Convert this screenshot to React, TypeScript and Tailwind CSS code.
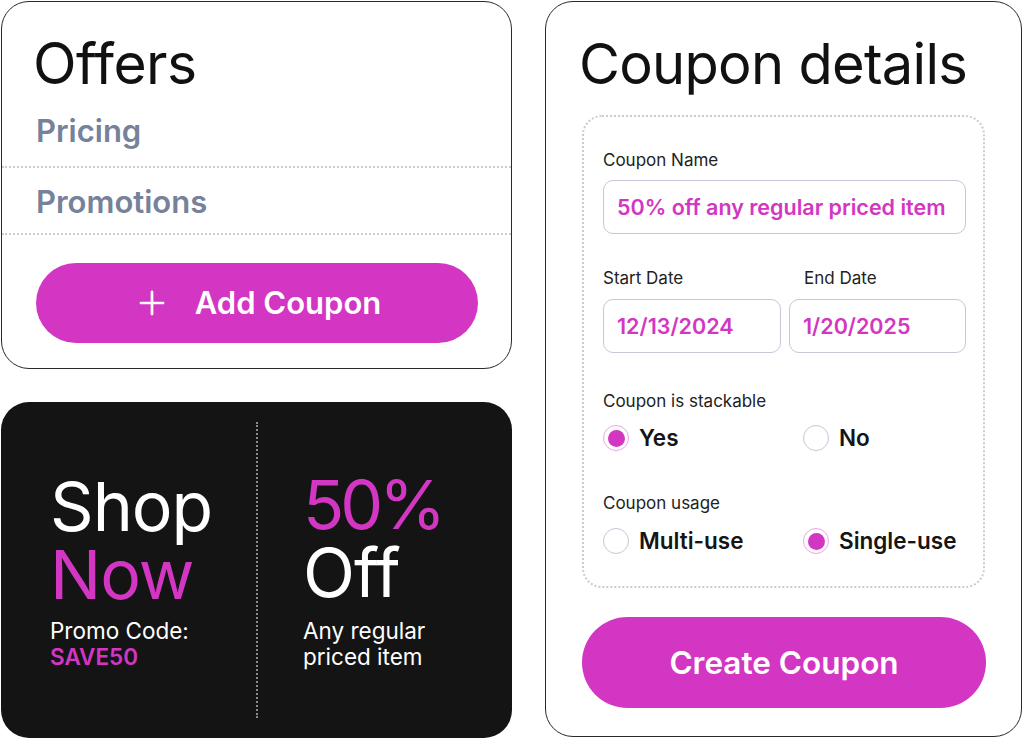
import React from "react";
import { Plus } from "lucide-react";

const head = "font-['Inter','Liberation_Sans',sans-serif]";
const body = "font-['Inter','Liberation_Sans',sans-serif]";

function Radio({ label, checked }: { label: string; checked?: boolean }) {
  return (
    <label className="h-[30px] flex items-center gap-[10px]">
      {checked ? (
        <span className="w-[26px] h-[26px] rounded-full border-[1.5px] border-[#eea3e6] flex items-center justify-center">
          <span className="w-[17px] h-[17px] rounded-full bg-[#d236c3]" />
        </span>
      ) : (
        <span className="w-[26px] h-[26px] rounded-full border-[1.5px] border-[#c4c8d8]" />
      )}
      <span className="text-[22.5px] leading-[30px] font-semibold text-[#151515]">{label}</span>
    </label>
  );
}

function Field({ value, className = "" }: { value: string; className?: string }) {
  return (
    <div
      className={`h-[54px] rounded-[10px] border-[1.5px] border-[#c4c8d8] flex items-center px-[13px] text-[21.5px] font-semibold text-[#d236c3] ${className}`}
    >
      {value}
    </div>
  );
}

export default function App() {
  return (
    <div className={`w-[1024px] h-[739px] overflow-hidden bg-white flex gap-[33px] pl-px pt-px ${body}`}>
      <div className="w-[511px] flex flex-col gap-[33px]">
        <div className="h-[368px] rounded-[28px] border-[1.5px] border-[#2a2a2a] pt-[30px] flex flex-col">
          <h1 className={`${head} px-[31px] text-[57px] leading-[64px] font-normal text-[#111] tracking-[-0.5px]`}>Offers</h1>
          <div className="mt-[2px] h-[70px] border-b-2 border-dotted border-[#c9ccd4] px-[34px] pt-[15px]">
            <span className="block text-[31px] leading-[36px] font-semibold text-[#76819a]">Pricing</span>
          </div>
          <div className="h-[67px] border-b-2 border-dotted border-[#c9ccd4] px-[34px] pt-[16px]">
            <span className="block text-[31px] leading-[36px] font-semibold text-[#76819a]">Promotions</span>
          </div>
          <div className="px-[34px] pt-[28px]">
            <button className="w-[442px] h-[80px] rounded-full bg-[#d236c3] text-white flex items-center justify-center gap-[24px] text-[31px] font-semibold">
              <Plus className="w-[38px] h-[38px]" strokeWidth={1.7} />
              <span>Add Coupon</span>
            </button>
          </div>
        </div>

        <div className="h-[336px] rounded-[28px] bg-[#141414] flex">
          <div className="w-[255px] pl-[49px] pt-[70px]">
            <div className={`${head} text-[68px] leading-[68px] font-normal tracking-[-1px]`}>
              <div className="text-white">Shop</div>
              <div className="text-[#d236c3]">Now</div>
            </div>
            <div className="mt-[10px] text-[22.5px] leading-[26px] text-white">Promo Code:</div>
            <div className="text-[22.5px] leading-[26px] font-semibold text-[#d236c3]">SAVE50</div>
          </div>
          <div className="py-[20px]">
            <div className="h-full border-l-2 border-dotted border-[#8a8a8a]" />
          </div>
          <div className="pl-[45px] pt-[68px]">
            <div className={`${head} text-[68px] leading-[68px] font-normal tracking-[-1px]`}>
              <div className="text-[#d236c3] tracking-[-4px]">50%</div>
              <div className="text-white">Off</div>
            </div>
            <div className="mt-[12px] text-[22.5px] leading-[26px] text-white">
              Any regular
              <br />
              priced item
            </div>
          </div>
        </div>
      </div>

      <div className="w-[477px] h-[736px] rounded-[28px] border-[1.5px] border-[#2a2a2a] px-[36px] pt-[30px] flex flex-col">
        <h1 className={`${head} -ml-[3px] text-[56px] leading-[64px] font-normal text-[#111] tracking-[-0.7px]`}>Coupon details</h1>
        <div className="mt-[19px] h-[473px] rounded-[20px] border-2 border-dotted border-[#c9ccd4] pl-[19px] pr-[17px] pt-[32px]">
          <div className="text-[17px] leading-[22px] text-[#222]">Coupon Name</div>
          <Field value="50% off any regular priced item" className="mt-[9px]" />
          <div className="mt-[33px] grid grid-cols-[178px_1fr] gap-[8px]">
            <div>
              <div className="text-[17px] leading-[22px] text-[#222]">Start Date</div>
              <Field value="12/13/2024" className="mt-[10px]" />
            </div>
            <div>
              <div className="text-[17px] leading-[22px] text-[#222] pl-[15px]">End Date</div>
              <Field value="1/20/2025" className="mt-[10px]" />
            </div>
          </div>
          <div className="mt-[37px] text-[17px] leading-[22px] text-[#222]">Coupon is stackable</div>
          <div className="mt-[11px] grid grid-cols-[200px_1fr]">
            <Radio label="Yes" checked />
            <Radio label="No" />
          </div>
          <div className="mt-[39px] text-[17px] leading-[22px] text-[#222]">Coupon usage</div>
          <div className="mt-[12px] grid grid-cols-[200px_1fr]">
            <Radio label="Multi-use" />
            <Radio label="Single-use" checked />
          </div>
        </div>
        <button className="mt-[29px] w-[404px] h-[91px] rounded-full bg-[#d236c3] text-white text-[31.5px] font-semibold">
          Create Coupon
        </button>
      </div>
    </div>
  );
}
